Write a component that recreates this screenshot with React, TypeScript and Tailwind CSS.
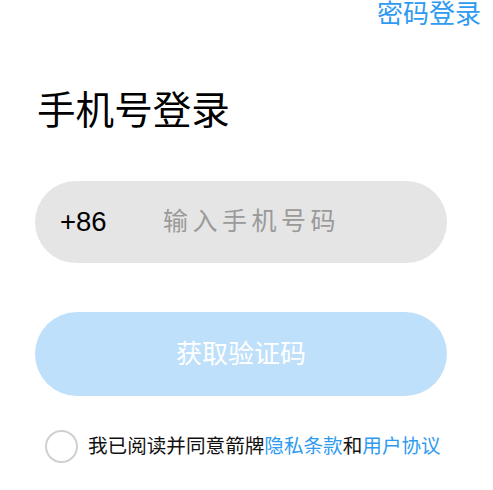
import { useState } from "react";

export default function App() {
  const [phone, setPhone] = useState("");
  const [agreed, setAgreed] = useState(false);

  return (
    <main
      className="min-h-screen bg-white"
      style={{ fontFamily: '"Liberation Sans", "Noto Sans CJK SC", sans-serif' }}
    >
      <div className="flex justify-end pr-3">
        <button className="text-[26px] leading-[28px] text-[#2f9bf0]">密码登录</button>
      </div>

      <div className="ml-[35px] w-[412px]">
        <h1 className="mt-[61px] pl-[2px] text-[38.6px] leading-[44px] font-normal text-black">
          手机号登录
        </h1>

        <div className="mt-[48px] flex h-[82px] items-center rounded-full bg-[#e5e5e5] pl-[25px]">
          <span className="w-[103px] text-[27.5px] text-black">+86</span>
          <input
            value={phone}
            onChange={(e) => setPhone(e.target.value)}
            placeholder="输入手机号码"
            className="min-w-0 flex-1 bg-transparent text-[25px] tracking-[4.5px] text-black outline-none placeholder:text-[#9a9a9a]"
          />
        </div>

        <button className="mt-[49px] flex h-[84px] w-full items-center justify-center rounded-full bg-[#bee0fa] text-[26px] text-white">
          获取验证码
        </button>

        <div className="mt-[34px] flex items-center">
          <button
            onClick={() => setAgreed(!agreed)}
            className={
              agreed
                ? "ml-[10px] h-[33px] w-[33px] rounded-full border-2 border-[#2f9bf0] bg-[#2f9bf0]"
                : "ml-[10px] h-[33px] w-[33px] rounded-full border-2 border-[#d0d0d0]"
            }
          />
          <p className="ml-[10px] text-[19.6px] text-[#111]">
            我已阅读并同意箭牌<span className="text-[#2f9bf0]">隐私条款</span>和
            <span className="text-[#2f9bf0]">用户协议</span>
          </p>
        </div>
      </div>
    </main>
  );
}
